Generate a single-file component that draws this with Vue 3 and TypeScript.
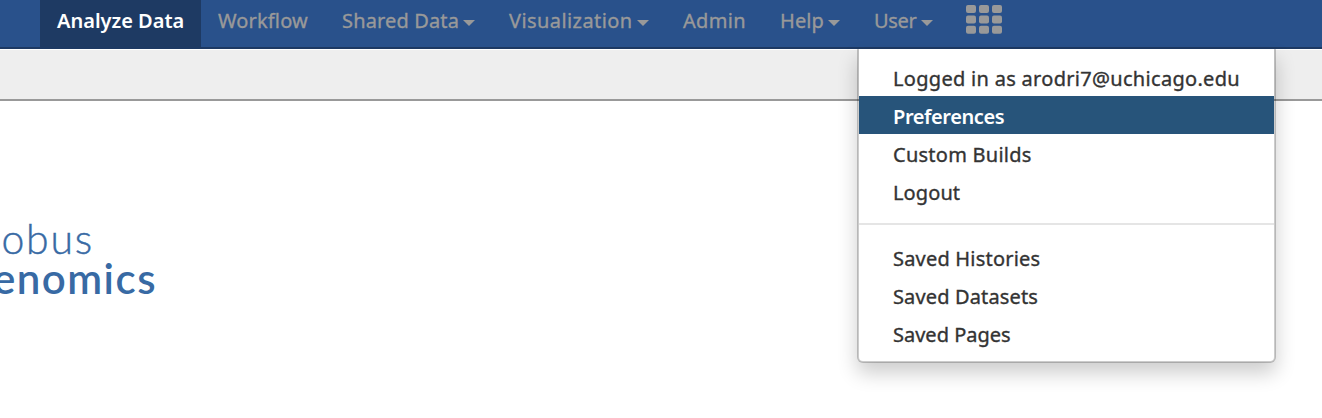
<script setup lang="ts">
interface NavItem { label: string; width: number; spacing: number; caret?: boolean; active?: boolean }
interface MenuItem { label: string; spacing: number; active?: boolean }

const navItems: NavItem[] = [
  { label: 'Analyze Data', width: 161, spacing: 0, active: true },
  { label: 'Workflow', width: 124, spacing: 0.15 },
  { label: 'Shared Data', width: 167, spacing: 0.15, caret: true },
  { label: 'Visualization', width: 174, spacing: 0.42, caret: true },
  { label: 'Admin', width: 97, spacing: 0.3 },
  { label: 'Help', width: 94, spacing: 0.1, caret: true },
  { label: 'User', width: 92, spacing: -0.3, caret: true },
]
const menuGroups: MenuItem[][] = [
  [
    { label: 'Logged in as arodri7@uchicago.edu', spacing: 0.3 },
    { label: 'Preferences', spacing: -0.42, active: true },
    { label: 'Custom Builds', spacing: 0.25 },
    { label: 'Logout', spacing: 0.1 },
  ],
  [
    { label: 'Saved Histories', spacing: 0.2 },
    { label: 'Saved Datasets', spacing: 0.14 },
    { label: 'Saved Pages', spacing: 0 },
  ],
]
const cells = [0, 1, 2, 3, 4, 5, 6, 7, 8]
</script>

<template>
  <div class="page">
    <header class="masthead">
      <nav class="nav">
        <a v-for="item in navItems" :key="item.label" class="nav-item" :class="{ active: item.active }" :style="{ width: item.width + 'px' }">
          <span class="label" :style="{ letterSpacing: item.spacing + 'px' }">{{ item.label }}</span>
          <span v-if="item.caret" class="caret"></span>
        </a>
        <a class="apps">
          <svg width="36" height="29" viewBox="0 0 36 29" fill="#999">
            <rect v-for="c in cells" :key="c" :x="(c % 3) * 13" :y="Math.floor(c / 3) * 10.4" width="10" height="8" rx="2" />
          </svg>
        </a>
      </nav>
      <div class="dropdown">
        <ul v-for="(group, g) in menuGroups" :key="g" class="group">
          <li v-for="item in group" :key="item.label" class="menu-item" :class="{ active: item.active }">
            <span class="label" :style="{ letterSpacing: item.spacing + 'px' }">{{ item.label }}</span>
          </li>
        </ul>
      </div>
    </header>
    <div class="toolbar"></div>
    <main class="content">
      <div class="logo">
        <span class="logo-top">lobus</span>
        <span class="logo-bottom">enomics</span>
      </div>
    </main>
  </div>
</template>

<style>
html, body { overflow: hidden; }
</style>
<style scoped>
.page { height: 418px; overflow: hidden; background: #fff; font-family: "Noto Sans", "Open Sans", sans-serif; font-size: 20px; }
.masthead { position: relative; z-index: 2; height: 47px; background: #29518b; border-bottom: 2px solid #1d3963; }
.nav { display: flex; height: 47px; padding-left: 40px; }
.nav-item { box-sizing: border-box; display: flex; align-items: flex-start; flex: none; height: 47px; padding: 6px 0 0 17px; line-height: 30px; color: #999; white-space: nowrap; }
.label { -webkit-text-stroke: 0.35px currentColor; }
.active .label { -webkit-text-stroke: 0; }
.nav-item.active { background: #1e3a63; color: #fff; font-weight: 600; }
.caret { width: 0; height: 0; margin: 14px 0 0 4px; border: 6px solid transparent; border-top-color: #999; border-bottom: 0; }
.apps { padding: 5px 0 0 17px; }
.apps svg { display: block; }
.dropdown { position: absolute; top: 49px; left: 857px; box-sizing: border-box; width: 419px; height: 314px; padding-top: 9px; background: #fff; background-clip: padding-box; border: 2px solid rgba(0, 0, 0, .2); border-top: 0; border-radius: 0 0 6px 6px; box-shadow: 0 10px 20px rgba(0, 0, 0, .2); }
.group { margin: 0; padding: 0; list-style: none; }
.group + .group { margin-top: 13px; padding-top: 13px; border-top: 2px solid #e5e5e5; }
.menu-item { box-sizing: border-box; height: 38px; padding: 1px 0 0 34px; line-height: 40px; color: #333; white-space: nowrap; }
.menu-item.active { background: #27547a; color: #fff; font-weight: 600; }
.toolbar { height: 49px; border-top: 1px solid #fff; border-bottom: 2px solid #999; background: #eee; }
.content { display: flex; padding-top: 118px; }
.logo { display: flex; flex-direction: column; align-items: flex-end; width: 157px; font-family: Lato, sans-serif; font-size: 41px; line-height: 40px; color: #386aa4; }
.logo-top { margin-right: 63px; font-weight: 300; letter-spacing: 1.8px; -webkit-text-stroke: 0.4px currentColor; }
.logo-bottom { font-size: 42px; line-height: 39px; font-weight: 600; letter-spacing: 1.5px; }
</style>
